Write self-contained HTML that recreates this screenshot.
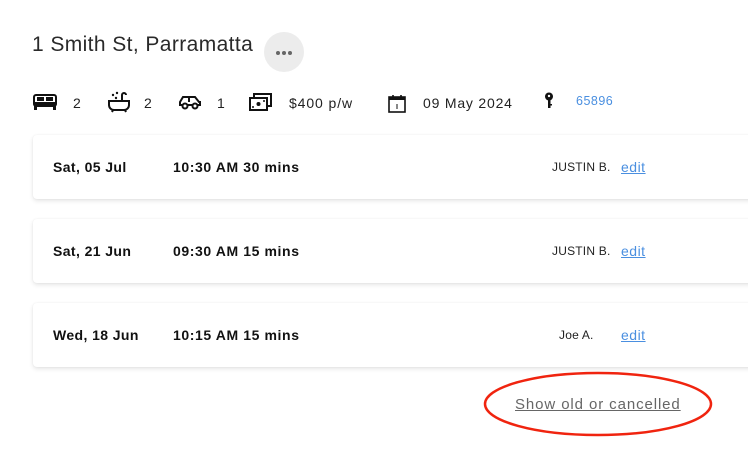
<!DOCTYPE html>
<html><head><style>
body{margin:0;width:748px;height:454px;background:#fff;font-family:"Liberation Sans",sans-serif;color:#222;position:relative;overflow:hidden}
.a{position:absolute}
.card{position:absolute;left:33px;width:740px;height:64px;background:#fff;border-radius:4px;box-shadow:0 2px 5px rgba(0,0,0,0.10),0 0 2px rgba(0,0,0,0.05)}
.card .d{position:absolute;left:20px;top:24px;font-size:14px;font-weight:bold;color:#111;letter-spacing:0.4px}
.card .t{position:absolute;left:140px;top:24px;font-size:14px;font-weight:bold;color:#111;letter-spacing:0.6px}
.card .n{position:absolute;top:25px;font-size:12px;color:#222;letter-spacing:0.2px}
.card .e{position:absolute;left:588px;top:24px;font-size:14px;color:#4a8fe0;text-decoration:underline;letter-spacing:0.5px}
.i{position:absolute;font-size:14px;color:#222;top:95px}
</style></head><body>
<div class="a" style="left:32px;top:33px;font-size:21px;color:#2a2a2a;letter-spacing:0.4px">1 Smith St, Parramatta</div>
<div class="a" style="left:264px;top:32px;width:40px;height:40px;border-radius:50%;background:#ececec"></div>
<div class="a" style="left:276px;top:51px;width:4px;height:4px;border-radius:50%;background:#666"></div>
<div class="a" style="left:282px;top:51px;width:4px;height:4px;border-radius:50%;background:#666"></div>
<div class="a" style="left:288px;top:51px;width:4px;height:4px;border-radius:50%;background:#666"></div>

<svg class="a" style="left:33px;top:93px" width="24" height="18" viewBox="0 0 24 18"><rect x="1" y="2" width="22" height="11" rx="2" fill="none" stroke="#111" stroke-width="2"/><rect x="4" y="4" width="7" height="4" fill="#111"/><rect x="13" y="4" width="7" height="4" fill="#111"/><rect x="1" y="9" width="22" height="5" fill="#111"/><rect x="1" y="14" width="3" height="3" fill="#111"/><rect x="20" y="14" width="3" height="3" fill="#111"/></svg>
<div class="i" style="left:73px">2</div>
<svg class="a" style="left:107px;top:91px" width="24" height="22" viewBox="0 0 24 22"><path d="M2 10h20v4a5 5 0 0 1-5 5H7a5 5 0 0 1-5-5z" fill="none" stroke="#111" stroke-width="2"/><path d="M15 10V4a2 2 0 0 1 4 0" fill="none" stroke="#111" stroke-width="2"/><circle cx="6" cy="4" r="1.2" fill="#111"/><circle cx="9" cy="7" r="1.2" fill="#111"/><circle cx="10" cy="2" r="1.2" fill="#111"/><path d="M6 19l-1 2M18 19l1 2" stroke="#111" stroke-width="2"/></svg>
<div class="i" style="left:144px">2</div>
<svg class="a" style="left:178px;top:94px" width="24" height="16" viewBox="0 0 24 16"><path d="M2 11V8l3-5h12l4 5h1v3z" fill="none" stroke="#111" stroke-width="2"/><circle cx="7" cy="12" r="2.5" fill="#fff" stroke="#111" stroke-width="2"/><circle cx="17" cy="12" r="2.5" fill="#fff" stroke="#111" stroke-width="2"/><path d="M11 3v5" stroke="#111" stroke-width="2"/></svg>
<div class="i" style="left:217px">1</div>
<svg class="a" style="left:249px;top:93px" width="24" height="18" viewBox="0 0 24 18"><rect x="1" y="5" width="17" height="12" fill="none" stroke="#111" stroke-width="2"/><path d="M5 5V1h17v12h-4" fill="none" stroke="#111" stroke-width="2"/><circle cx="9.5" cy="11" r="2" fill="#111"/><circle cx="4" cy="14" r="1" fill="#111"/><circle cx="15" cy="8" r="1" fill="#111"/></svg>
<div class="i" style="left:289px;letter-spacing:0.9px">$400 p/w</div>
<svg class="a" style="left:388px;top:94px" width="18" height="19" viewBox="0 0 18 19"><rect x="1" y="3" width="16" height="15" fill="none" stroke="#111" stroke-width="1.6"/><rect x="1" y="3" width="16" height="3" fill="#111"/><path d="M5 1v3M13 1v3" stroke="#111" stroke-width="1.6"/><rect x="8.3" y="10" width="1.4" height="5" fill="#555"/></svg>
<div class="i" style="left:423px;letter-spacing:0.8px">09 May 2024</div>
<svg class="a" style="left:544px;top:92px" width="10" height="18" viewBox="0 0 10 18"><circle cx="5" cy="4.5" r="4" fill="#111"/><circle cx="5" cy="4" r="1.2" fill="#fff"/><path d="M4 8h2.5v8H4z M6 12h2v1.5H6z" fill="#111"/></svg>
<div class="i" style="left:576px;top:94px;font-size:12.5px;color:#4a8fe0;letter-spacing:0.5px">65896</div>

<div class="card" style="top:135px"><div class="d">Sat, 05 Jul</div><div class="t">10:30 AM 30 mins</div><div class="n" style="left:519px">JUSTIN B.</div><div class="e">edit</div></div>
<div class="card" style="top:219px"><div class="d">Sat, 21 Jun</div><div class="t">09:30 AM 15 mins</div><div class="n" style="left:519px">JUSTIN B.</div><div class="e">edit</div></div>
<div class="card" style="top:303px"><div class="d">Wed, 18 Jun</div><div class="t">10:15 AM 15 mins</div><div class="n" style="left:526px">Joe A.</div><div class="e">edit</div></div>

<div class="a" style="left:515px;top:396px;font-size:15px;color:#666;text-decoration:underline;letter-spacing:0.9px">Show old or cancelled</div>
<svg class="a" style="left:483px;top:368px" width="235" height="72"><ellipse cx="115" cy="36" rx="113" ry="31" fill="none" stroke="#f0240f" stroke-width="2.5"/></svg>
</body></html>
